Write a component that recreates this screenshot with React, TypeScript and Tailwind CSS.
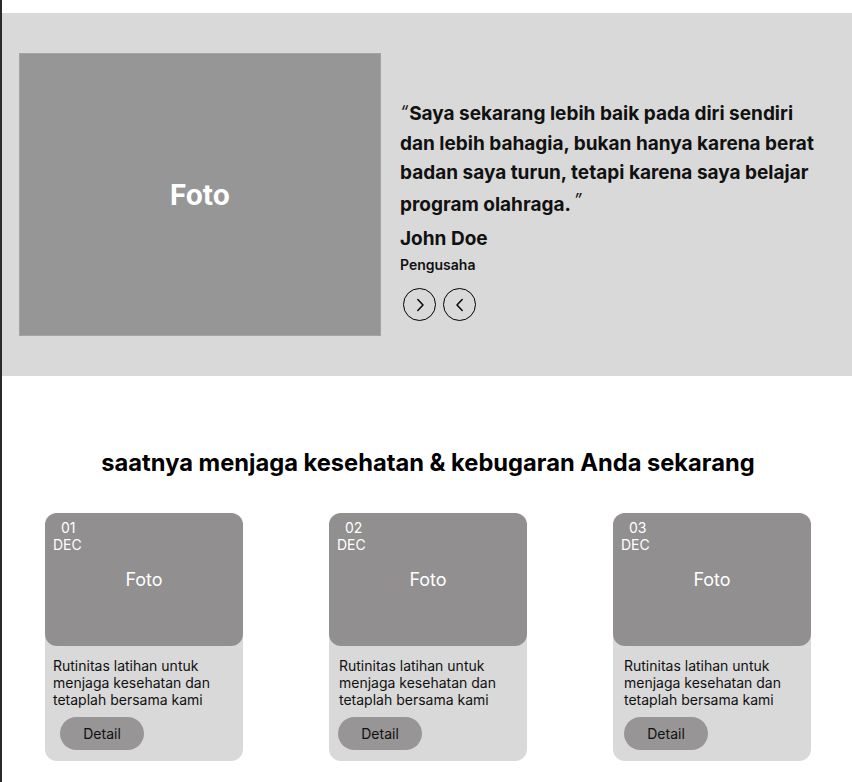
import React from "react";

const cards = [
  { day: "01", text: "pl-[8px]", btn: "ml-[15px]" },
  { day: "02", text: "pl-[10px]", btn: "ml-[9px]" },
  { day: "03", text: "pl-[11px]", btn: "ml-[11px]" },
];

function Arrow({ dir }: { dir: "right" | "left" }) {
  return (
    <div className="w-[33px] h-[33px] rounded-full border-[1.5px] border-black flex items-center justify-center">
      <svg width="14" height="14" viewBox="0 0 14 14" fill="none">
        {dir === "right" ? (
          <path d="M4.8 1.5 L10 7 L4.8 12.5" stroke="black" strokeWidth="1.4" strokeLinecap="round" strokeLinejoin="round" />
        ) : (
          <path d="M9.2 1.5 L4 7 L9.2 12.5" stroke="black" strokeWidth="1.4" strokeLinecap="round" strokeLinejoin="round" />
        )}
      </svg>
    </div>
  );
}

export default function App() {
  return (
    <div className="w-[852px] h-[782px] flex bg-white overflow-hidden" style={{ fontFamily: "Inter, 'Noto Sans', sans-serif" }}>
      <div className="w-[2px] h-full bg-[#2a2a2a] shrink-0" />
      <div className="flex-1 flex flex-col">
        <div className="h-[13px] bg-white" />
        <section className="h-[363px] bg-[#d9d9d9] flex pt-[40px] pl-[17px]">
          <div className="w-[362px] h-[283px] bg-[#969696] border border-[#a3a3a3] flex items-center justify-center">
            <span className="text-white text-[28px] font-bold">Foto</span>
          </div>
          <div className="ml-[19px] pt-[46px] flex flex-col">
            <p className="text-[19px] leading-[29px] font-bold text-[#111] whitespace-nowrap">
              <span className="font-normal italic text-[17px] relative -top-[2px] mr-[1px]">“</span>Saya sekarang lebih baik pada diri sendiri
              <br />
              dan lebih bahagia, bukan hanya karena berat
              <br />
              badan saya turun, tetapi karena saya belajar
              <br />
              <span className="inline-block mt-[3px]">
                program olahraga.<span className="font-normal italic text-[17px] relative -top-[5px] ml-[3px]">”</span>
              </span>
            </p>
            <div className="mt-[7px] text-[19px] leading-[24px] font-bold text-[#111]">John Doe</div>
            <div className="mt-[5px] text-[14px] leading-[17px] font-semibold text-[#111]">Pengusaha</div>
            <div className="mt-[15px] ml-[3px] flex gap-[7px]">
              <Arrow dir="right" />
              <Arrow dir="left" />
            </div>
          </div>
        </section>
        <h2 className="mt-[72px] text-center text-[23.7px] leading-[30px] font-bold text-black pl-[2px]">
          saatnya menjaga kesehatan &amp; kebugaran Anda sekarang
        </h2>
        <div className="mt-[35px] flex gap-[86px] pl-[43px]">
          {cards.map((c) => (
            <div key={c.day} className="w-[198px] h-[248px] bg-[#d9d9d9] rounded-[12px] flex flex-col">
              <div className="h-[133px] bg-[#918f8f] rounded-[12px] relative flex items-center justify-center">
                <div className="absolute left-[8px] top-[6px] text-white text-[14px] leading-[17px]">
                  <div className="pl-[8px]">{c.day}</div>
                  <div>DEC</div>
                </div>
                <span className="text-white text-[18px] -mt-[1px]">Foto</span>
              </div>
              <p className={`mt-[11px] text-[14px] leading-[17px] text-[#111] ${c.text}`}>
                Rutinitas latihan untuk
                <br />
                menjaga kesehatan dan
                <br />
                tetaplah bersama kami
              </p>
              <div className={`mt-[9px] w-[84px] h-[33px] rounded-full bg-[#979595] flex items-center justify-center text-[14px] text-[#111] ${c.btn}`}>
                Detail
              </div>
            </div>
          ))}
        </div>
      </div>
    </div>
  );
}
